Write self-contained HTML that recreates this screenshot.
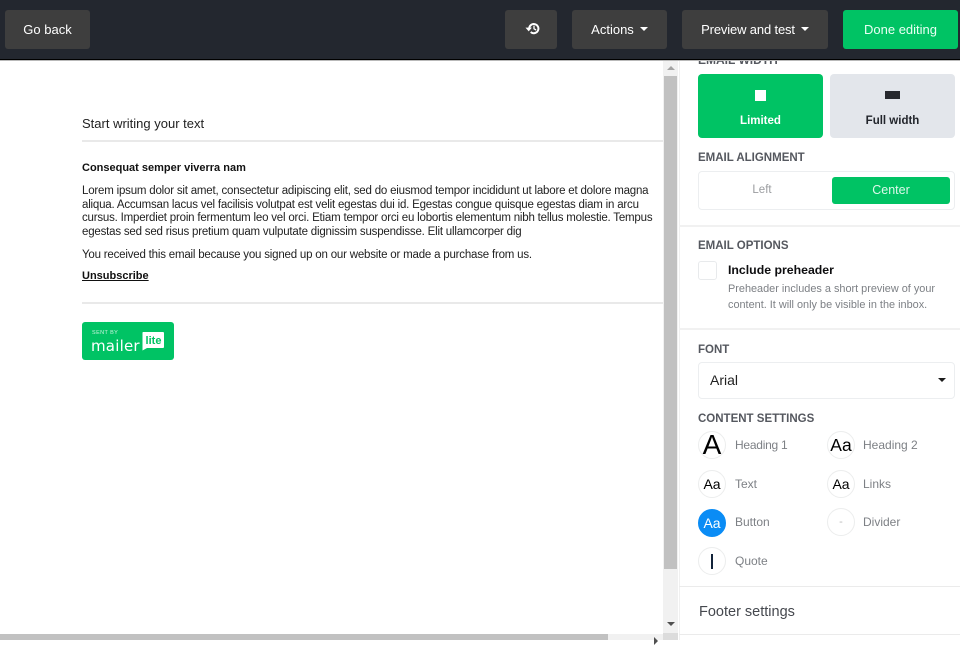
<!DOCTYPE html>
<html lang="en">
<head>
<meta charset="utf-8">
<title>Editor</title>
<style>
html,body{margin:0;padding:0;background:#fff;}
body{position:relative;width:960px;height:640px;overflow:hidden;font-family:"Liberation Sans",Arial,sans-serif;}
.a{position:absolute;white-space:nowrap;}
.btn{position:absolute;top:10px;height:39px;background:#3e3e3e;border-radius:3px;color:#fff;font-size:13px;line-height:40px;text-align:center;}
.caret{display:inline-block;width:0;height:0;border-left:4.5px solid transparent;border-right:4.5px solid transparent;border-top:4.5px solid #fff;vertical-align:3px;margin-left:6px;}
.h{position:absolute;white-space:nowrap;font-size:11.5px;font-weight:bold;color:#55585f;line-height:14px;}
.sep{position:absolute;left:679px;width:281px;height:1px;background:#ebebeb;}
.c{position:absolute;width:26px;height:26px;border:1px solid #eceded;border-radius:50%;background:#fff;color:#000;text-align:center;line-height:26px;font-size:15px;overflow:hidden;}
.l{position:absolute;white-space:nowrap;font-size:12px;color:#7d8085;line-height:14px;}
.p{position:absolute;left:82px;white-space:nowrap;font-size:11.5px;letter-spacing:-.2px;line-height:13.6px;color:#222;}
</style>
</head>
<body>
<!-- clipped label sits under the top bar -->
<div class="h" style="left:698px;top:53px;font-size:12px;">EMAIL WIDTH</div>

<div class="a" style="left:0;top:0;width:960px;height:59px;background:#23272f;"></div>
<div class="a" style="left:0;top:59px;width:960px;height:1px;background:#000;"></div>
<div class="a" style="left:0;top:60px;width:960px;height:1px;background:#b9b9b9;"></div>

<div class="btn" style="left:5px;width:85px;">Go back</div>
<div class="btn" style="left:505px;width:52px;">
<svg width="15" height="13" viewBox="0 0 15 13" style="position:absolute;left:20px;top:12px;"><path d="M4.2 6.5a4.6 4.6 0 1 1 1.5 3.5" fill="none" stroke="#fff" stroke-width="2"/><path d="M0.5 5.6h6.4L3.7 9.4z" fill="#fff"/><path d="M9 3.6v3.2l2.1 1.2" fill="none" stroke="#fff" stroke-width="1.3"/></svg>
</div>
<div class="btn" style="left:572px;width:95px;">Actions<span class="caret"></span></div>
<div class="btn" style="left:682px;width:146px;letter-spacing:-.15px;">Preview and test<span class="caret"></span></div>
<div class="btn" style="left:843px;width:115px;background:#00c364;color:#e9fff4;">Done editing</div>

<!-- email content -->
<div class="a" style="left:82px;top:116px;font-size:13px;line-height:16px;color:#222;">Start writing your text</div>
<div class="a" style="left:82px;top:140px;width:581px;height:2px;background:#e9e9e9;"></div>
<div class="a" style="left:82px;top:161px;font-size:11px;line-height:14px;font-weight:bold;color:#111;">Consequat semper viverra nam</div>
<div class="p" style="top:185px;">Lorem ipsum dolor sit amet, consectetur adipiscing elit, sed do eiusmod tempor incididunt ut labore et dolore magna<br>aliqua. Accumsan lacus vel facilisis volutpat est velit egestas dui id. Egestas congue quisque egestas diam in arcu<br>cursus. Imperdiet proin fermentum leo vel orci. Etiam tempor orci eu lobortis elementum nibh tellus molestie. Tempus<br>egestas sed sed risus pretium quam vulputate dignissim suspendisse. Elit ullamcorper dig</div>
<div class="p" style="top:249px;">You received this email because you signed up on our website or made a purchase from us.</div>
<div class="a" style="left:82px;top:269px;font-size:11px;line-height:14px;font-weight:bold;color:#111;text-decoration:underline;">Unsubscribe</div>
<div class="a" style="left:82px;top:302px;width:581px;height:2px;background:#e9e9e9;"></div>

<!-- badge -->
<div class="a" style="left:82px;top:322px;width:92px;height:38px;background:#00c364;border-radius:3px;"></div>
<div class="a" style="left:92px;top:330px;font-size:5.5px;line-height:7px;color:#c9f3de;letter-spacing:.4px;">SENT BY</div>
<div class="a" style="left:91px;top:336px;line-height:20px;color:#fff;letter-spacing:.2px;font-family:'DejaVu Sans',sans-serif;font-size:15px;">mailer</div>
<svg class="a" style="left:141px;top:331px;" width="24" height="21" viewBox="0 0 24 21"><path d="M2 1h20a1 1 0 0 1 1 1v14a1 1 0 0 1-1 1H6l-4.500 2.500V2a1 1 0 0 1 .5-1z" fill="#fff"/><text x="12.500" y="13" font-family="Liberation Sans,sans-serif" font-size="11" font-weight="bold" fill="#00c364" text-anchor="middle">lite</text></svg>

<!-- vertical scrollbar -->
<div class="a" style="left:663px;top:61px;width:15px;height:572px;background:#f1f1f1;"></div>
<div class="a" style="left:664px;top:76px;width:13px;height:493px;background:#c1c1c1;"></div>
<div class="a" style="left:667px;top:66px;width:0;height:0;border-left:4px solid transparent;border-right:4px solid transparent;border-bottom:4px solid #a3a3a3;"></div>
<div class="a" style="left:667px;top:622px;width:0;height:0;border-left:4px solid transparent;border-right:4px solid transparent;border-top:4px solid #505050;"></div>
<!-- horizontal scrollbar -->
<div class="a" style="left:0;top:634px;width:663px;height:6px;background:#f1f1f1;"></div>
<div class="a" style="left:0;top:634px;width:608px;height:6px;background:#c1c1c1;"></div>
<div class="a" style="left:654px;top:637px;width:0;height:0;border-top:4px solid transparent;border-bottom:4px solid transparent;border-left:4px solid #505050;"></div>
<div class="a" style="left:663px;top:633px;width:15px;height:7px;background:#dcdcdc;"></div>
<div class="a" style="left:679px;top:61px;width:1px;height:579px;background:#f0f0f0;"></div>

<!-- sidebar -->
<div class="a" style="left:698px;top:74px;width:125px;height:64px;background:#00c364;border-radius:4px;"></div>
<div class="a" style="left:755px;top:90px;width:11px;height:11px;background:#fff;"></div>
<div class="a" style="left:698px;top:114px;width:125px;text-align:center;font-size:11.5px;font-weight:bold;line-height:14px;color:#fff;">Limited</div>
<div class="a" style="left:830px;top:74px;width:125px;height:64px;background:#e3e6eb;border-radius:4px;"></div>
<div class="a" style="left:885px;top:91px;width:15px;height:8px;background:#27292e;"></div>
<div class="a" style="left:830px;top:114px;width:125px;text-align:center;font-size:11.5px;font-weight:bold;line-height:14px;color:#23262c;">Full width</div>

<div class="h" style="left:698px;top:151px;">EMAIL ALIGNMENT</div>
<div class="a" style="left:698px;top:171px;width:255px;height:37px;border:1px solid #eceef0;border-radius:4px;"></div>
<div class="a" style="left:698px;top:183px;width:128px;text-align:center;font-size:11.5px;line-height:14px;color:#9a9c9f;">Left</div>
<div class="a" style="left:832px;top:177px;width:118px;height:27px;background:#00c364;border-radius:3px;color:#dcf8ea;font-size:12.5px;line-height:27px;text-align:center;">Center</div>

<div class="sep" style="top:225px;height:2px;background:#f1f1f1;"></div>

<div class="h" style="left:698px;top:239px;">EMAIL OPTIONS</div>
<div class="a" style="left:698px;top:261px;width:17px;height:17px;border:1px solid #e8eaec;border-radius:3px;"></div>
<div class="a" style="left:728px;top:263px;font-size:12.3px;font-weight:bold;line-height:15px;color:#0e0e10;">Include preheader</div>
<div class="a" style="left:728px;top:281px;font-size:10.9px;line-height:16px;color:#7d8085;">Preheader includes a short preview of your<br>content. It will only be visible in the inbox.</div>

<div class="sep" style="top:328px;height:2px;background:#f1f1f1;"></div>

<div class="h" style="left:698px;top:343px;">FONT</div>
<div class="a" style="left:698px;top:362px;width:255px;height:35px;border:1px solid #eceef0;border-radius:4px;"></div>
<div class="a" style="left:710px;top:372px;font-size:14px;line-height:16px;color:#222;">Arial</div>
<div class="a" style="left:938px;top:378px;width:0;height:0;border-left:4px solid transparent;border-right:4px solid transparent;border-top:4px solid #1c1c1c;"></div>

<div class="h" style="left:698px;top:412px;">CONTENT SETTINGS</div>

<div class="c" style="left:698px;top:431px;font-size:28px;">A</div>
<div class="l" style="left:735px;top:438px;letter-spacing:-.25px;">Heading 1</div>
<div class="c" style="left:827px;top:431px;font-size:17.5px;">Aa</div>
<div class="l" style="left:863px;top:438px;">Heading 2</div>

<div class="c" style="left:698px;top:470px;font-size:14px;">Aa</div>
<div class="l" style="left:735px;top:477px;">Text</div>
<div class="c" style="left:827px;top:470px;font-size:14px;">Aa</div>
<div class="l" style="left:863px;top:477px;">Links</div>

<div class="c" style="left:698px;top:509px;background:#0a8cf5;border-color:#0a8cf5;color:#fff;font-size:14px;">Aa</div>
<div class="l" style="left:735px;top:515px;">Button</div>
<div class="c" style="left:827px;top:508px;color:#bbb;font-size:11px;">-</div>
<div class="l" style="left:863px;top:515px;">Divider</div>

<div class="c" style="left:698px;top:547px;"></div>
<div class="a" style="left:711px;top:554px;width:1.5px;height:15px;background:#12233a;"></div>
<div class="l" style="left:735px;top:554px;">Quote</div>

<div class="sep" style="top:586px;height:1px;"></div>
<div class="a" style="left:699px;top:604px;font-size:14.5px;line-height:16px;color:#45484e;">Footer settings</div>
<div class="sep" style="top:634px;height:1px;"></div>
</body>
</html>
